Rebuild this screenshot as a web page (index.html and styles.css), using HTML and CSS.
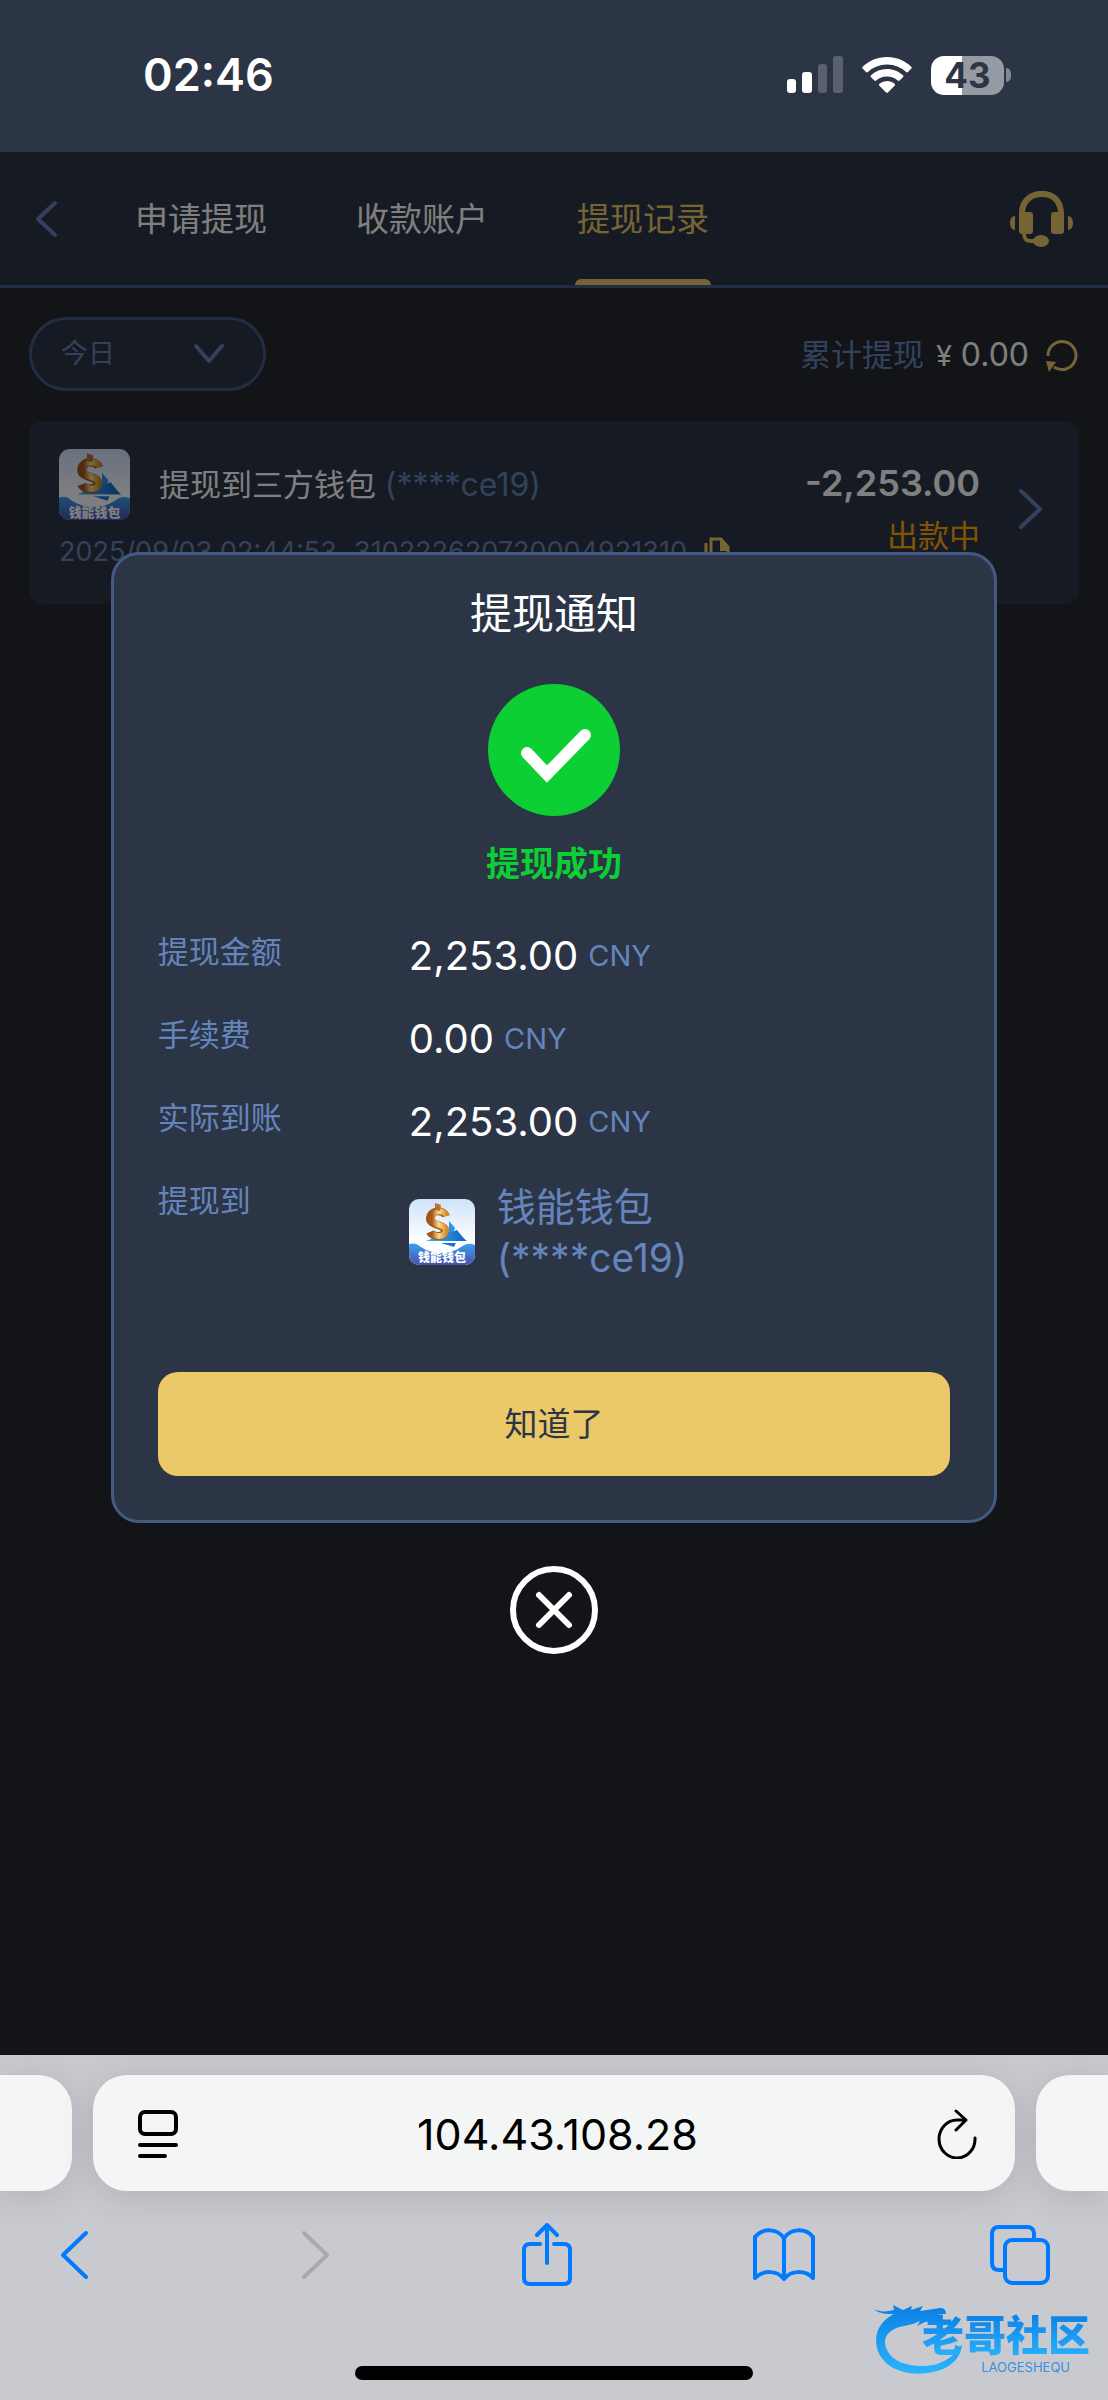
FILE: index.html
```html
<!DOCTYPE html>
<html lang="zh-CN">
<head>
<meta charset="utf-8">
<meta name="viewport" content="width=device-width, initial-scale=1">
<title>提现记录</title>
<link rel="stylesheet" href="styles.css">
</head>
<body>
<svg class="defs" aria-hidden="true">
  <defs>
    <linearGradient id="sky" x1="0" y1="0" x2="0" y2="1"><stop offset="0" stop-color="#cfe2fb"/><stop offset=".6" stop-color="#fbfdff"/></linearGradient>
    <linearGradient id="sea" x1="0" y1="0" x2="0" y2="1"><stop offset="0" stop-color="#3aa0ee"/><stop offset="1" stop-color="#4d4fb0"/></linearGradient>
    <linearGradient id="coin" x1="0" y1="0" x2="1" y2="0"><stop offset="0" stop-color="#a8591c"/><stop offset=".45" stop-color="#ffd98a"/><stop offset="1" stop-color="#d08a2c"/></linearGradient>
    <linearGradient id="sail" x1="0" y1="0" x2="1" y2="0"><stop offset="0" stop-color="#35b4f2"/><stop offset="1" stop-color="#1463c4"/></linearGradient>
    <linearGradient id="dragon" x1="0" y1="0" x2="0" y2="1"><stop offset="0" stop-color="#0b7fe4"/><stop offset="1" stop-color="#2bb4ff"/></linearGradient>
    <symbol id="wallet" viewBox="0 0 66 66">
      <rect width="66" height="66" rx="10" fill="url(#sky)"/>
      <path d="M40 22l6 7-2 5h4l10 8H18l22-10z" fill="#2b93e6"/>
      <path d="M17 42L48 31l9 11z" fill="url(#sail)"/>
      <path d="M32 44h15l-2 4z" fill="#1b74d0"/>
      <path d="M37 17c-2-6-15-7-16 2-1 8 16 6 15 13-1 7-13 6-15 1" fill="none" stroke="#9c5a1a" stroke-width="8"/>
      <path d="M38 17c-2-6-14-7-15 2-1 8 15 6 14 13-1 7-12 6-14 1" fill="none" stroke="url(#coin)" stroke-width="6"/>
      <path d="M26 4l6 2-1 6-5-1z" fill="#b5722a"/>
      <path d="M0 45c5-1 7-1 12 3 12 8 28 8 40 0 6-4 9-4 14-2v10a10 10 0 0 1-10 10H10A10 10 0 0 1 0 56z" fill="url(#sea)"/>
      <text x="33" y="63" text-anchor="middle" class="wallet-name">钱能钱包</text>
    </symbol>
  </defs>
</svg>

<div class="screen">
  <div class="status">
    <time class="clock">02:46</time>
    <div class="signals">
      <svg width="56" height="38" viewBox="0 0 56 38" fill="#fff">
        <rect y="23" width="9" height="14" rx="3"/><rect x="15" y="16" width="10" height="21" rx="3"/>
        <rect x="31" y="8" width="9" height="29" rx="3" opacity=".22"/><rect x="46" y="0" width="10" height="37" rx="3" opacity=".22"/>
      </svg>
      <svg width="50" height="36" viewBox="0 0 50 36" fill="#fff">
        <path d="M25 0c9.500 0 18 3.700 24.300 9.700.6.600.6 1.300 0 1.900l-3.300 3.400c-.5.500-1.300.5-1.900 0A27.600 27.600 0 0 0 25 7.500 27.600 27.600 0 0 0 5.900 15c-.6.500-1.400.5-1.900 0L.7 11.600c-.6-.6-.6-1.300 0-1.900C7 3.700 15.500 0 25 0z"/>
        <path d="M25 12c6.200 0 11.800 2.400 16 6.300.6.600.6 1.300 0 1.900l-3.400 3.400c-.5.500-1.200.5-1.800 0A16 16 0 0 0 25 19.500a16 16 0 0 0-10.800 4.100c-.6.500-1.300.5-1.800 0L9 20.200c-.6-.6-.6-1.300 0-1.900A23.400 23.400 0 0 1 25 12z"/>
        <path d="M25 24c2.900 0 5.500 1 7.600 2.800.6.500.6 1.300 0 1.900l-6.700 6.700c-.5.500-1.300.5-1.800 0l-6.700-6.700c-.6-.6-.6-1.400 0-1.900A11.600 11.600 0 0 1 25 24z"/>
      </svg>
      <div class="battery"><span class="level">43</span><i class="nub"></i></div>
    </div>
  </div>

  <div class="app">
    <header class="tabs-bar">
      <button class="icon-btn back" aria-label="返回"><svg width="24" height="38" viewBox="0 0 24 38"><path d="M21 3L4 19l17 16"/></svg></button>
      <nav class="tabs">
        <a class="tab" href="#apply">申请提现</a>
        <a class="tab" href="#account">收款账户</a>
        <a class="tab active" href="#records">提现记录</a>
      </nav>
      <button class="icon-btn" aria-label="客服">
        <svg width="64" height="58" viewBox="0 0 64 58" fill="#ebc868">
          <path d="M9 24C9 9 19 1 32 1s22 8 22 23h-6C48 13 42 7 32 7s-17 6-17 17z"/>
          <rect x="9" y="22" width="14" height="22" rx="3"/><rect x="41" y="22" width="13" height="22" rx="3"/>
          <path d="M5 26v14c-3 0-5-3-5-7s2-7 5-7zM58 26v14c3 0 5-3 5-7s-2-7-5-7z"/>
          <path d="M14 43c0 6 2 8 7 8h6" fill="none" stroke="#ebc868" stroke-width="4"/><ellipse cx="31" cy="51" rx="8" ry="6"/>
        </svg>
      </button>
    </header>

    <main class="records">
      <div class="filter">
        <div class="period">
          <select aria-label="时间范围"><option>今日</option></select>
          <svg class="period-arrow" width="32" height="22" viewBox="0 0 32 22"><path d="M3 3l13 15L29 3"/></svg>
        </div>
        <div class="total">
          <span class="muted">累计提现</span>
          <span class="sum"><span class="yen">¥</span> 0.00</span>
          <button class="icon-btn refresh" aria-label="刷新"><svg width="34" height="34" viewBox="0 0 34 34"><path d="M3 18A14 14 0 1 1 9 29" fill="none" stroke="#ebc868" stroke-width="3"/><path d="M1 23l10 1-7 10z" fill="#ebc868"/></svg></button>
        </div>
      </div>

      <article class="record">
        <div class="record-info">
          <div class="record-head">
            <svg class="record-logo" role="img" aria-label="钱能钱包"><use href="#wallet"/></svg>
            <span class="record-name">提现到三方钱包 <span class="muted account">(****ce19)</span></span>
          </div>
          <div class="record-meta"><span>2025/09/03 02:44:53</span><span>310222620720004921310</span>
            <svg width="26" height="30" viewBox="0 0 26 30" fill="none" stroke="#ebc868" stroke-width="3"><path d="M2 6v22h16M7 2h10l7 8v14H7z"/><path d="M16 2l8 8v4h-8z" fill="#ebc868" stroke="none"/></svg>
          </div>
        </div>
        <div class="record-result">
          <strong class="amount">-2,253.00</strong>
          <span class="state">出款中</span>
        </div>
        <svg class="record-go" width="26" height="42" viewBox="0 0 26 42"><path d="M3 3l19 18L3 39"/></svg>
      </article>
    </main>

    <div class="overlay">
      <section class="dialog" role="dialog" aria-labelledby="dialog-title">
        <h1 class="dialog-title" id="dialog-title">提现通知</h1>
        <svg class="success" width="132" height="132" viewBox="0 0 132 132"><circle cx="66" cy="66" r="66" fill="#0ccf33"/><path d="M39 69l20 21 38-39" fill="none" stroke="#fff" stroke-width="12" stroke-linecap="round"/></svg>
        <p class="success-text">提现成功</p>
        <dl class="details">
          <dt>提现金额</dt><dd>2,253.00 <small>CNY</small></dd>
          <dt>手续费</dt><dd>0.00 <small>CNY</small></dd>
          <dt>实际到账</dt><dd>2,253.00 <small>CNY</small></dd>
          <dt>提现到</dt>
          <dd class="target"><svg class="target-logo" role="img" aria-label="钱能钱包"><use href="#wallet"/></svg><span>钱能钱包<br>(****ce19)</span></dd>
        </dl>
        <button class="confirm">知道了</button>
      </section>
      <button class="icon-btn" aria-label="关闭"><svg width="88" height="90" viewBox="0 0 88 90" fill="none" stroke="#fff" stroke-width="6" stroke-linecap="round"><circle cx="44" cy="45" r="41"/><path d="M29 30l30 30M59 30L29 60"/></svg></button>
    </div>
  </div>

  <footer class="browser">
    <div class="address-row">
      <div class="side-tab"></div>
      <div class="address">
        <button class="icon-btn" aria-label="页面菜单"><svg width="40" height="48" viewBox="0 0 40 48" fill="none" stroke="#000" stroke-width="4" stroke-linecap="round"><rect x="2" y="2" width="36" height="22" rx="5"/><path d="M2 35h36M2 46h25"/></svg></button>
        <input class="url" type="text" value="104.43.108.28" aria-label="网址">
        <button class="icon-btn" aria-label="重新载入"><svg width="40" height="50" viewBox="0 0 40 50" fill="none" stroke="#000" stroke-width="3" stroke-linecap="round" stroke-linejoin="round"><path d="M38 29a18 19 0 1 1-18-18h8M19 2l10 9-10 10"/></svg></button>
      </div>
      <div class="side-tab"></div>
    </div>
    <nav class="toolbar">
      <button class="icon-btn" aria-label="后退"><svg width="30" height="50" viewBox="0 0 30 50"><path d="M27 3L4 25l23 22"/></svg></button>
      <button class="icon-btn" aria-label="前进" disabled><svg width="40" height="50" viewBox="-10 0 40 50"><path d="M3 3l23 22L3 47"/></svg></button>
      <button class="icon-btn" aria-label="分享"><svg width="50" height="64" viewBox="0 0 50 64"><path d="M18 21H8q-6 0-6 6v28q0 6 6 6h34q6 0 6-6V27q0-6-6-6H32M25 40V3M15 12L25 2l10 10"/></svg></button>
      <button class="icon-btn" aria-label="书签"><svg width="62" height="56" viewBox="0 0 62 56"><path d="M31 11C24 1 9 1 2 10v41c8-8 22-8 29 1 7-9 21-9 29-1V10C53 1 38 1 31 11v41"/></svg></button>
      <button class="icon-btn" aria-label="标签页"><svg width="60" height="60" viewBox="0 0 60 60"><rect x="15" y="15" width="43" height="43" rx="7"/><path d="M15 45H9q-7 0-7-7V9q0-7 7-7h28q7 0 7 7v6"/></svg></button>
    </nav>
    <div class="home-bar"></div>
    <div class="watermark">
      <svg width="92" height="72" viewBox="0 0 92 72" fill="url(#dragon)"><path d="M0 7c7 4 14 2 20 1l-1-5 10 5 9-4-1 4 12-4-3 5 20-3c4 0 6 2 6 6l-8 0 4 4-4 3-13 1-8 4 3-5-7 3-9 2C12 27 8 38 13 48c7 15 31 19 50 14 13-4 20-12 25-20-1 15-13 25-29 28C33 76 8 66 3 46-1 30 8 18 20 12 13 12 5 12 0 7z"/></svg>
      <div class="watermark-text"><b>老哥社区</b><span>LAOGESHEQU</span></div>
    </div>
  </footer>
</div>
</body>
</html>
```
FILE: styles.css
```css
:root {
  --panel: #2c3546;
  --line: #435a84;
  --muted: #6485bb;
  --gold: #ebc868;
}

* { box-sizing: border-box; }

body {
  margin: 0;
  background: #24282f;
  color: #fff;
  font-family: Inter, "Noto Sans CJK SC", sans-serif;
  font-size: 31px;
  line-height: 44px;
}

button, select, input { font: inherit; color: inherit; border: 0; background: none; padding: 0; margin: 0; }
svg { display: block; flex: none; }
.defs { position: absolute; width: 0; height: 0; }
.icon-btn { display: flex; flex: none; cursor: pointer; }
.muted { color: var(--muted); }
.wallet-name { font: 900 12px "Noto Sans CJK SC", sans-serif; fill: #fff; }

.screen { display: flex; flex-direction: column; min-height: 100vh; }

/* Status bar */
.status {
  display: flex;
  align-items: center;
  justify-content: space-between;
  height: 152px;
  padding: 0 97px 2px 143px;
  background: var(--panel);
}
.clock { font-size: 45px; font-weight: 600; }
.signals { display: flex; align-items: center; gap: 19px; }
.battery { display: flex; align-items: center; gap: 2px; }
.level {
  width: 73px;
  height: 39px;
  border-radius: 13px;
  background: linear-gradient(90deg, #fff 43%, #969aa2 43%);
  color: var(--panel);
  font-size: 35px;
  font-weight: 700;
  line-height: 39px;
  text-align: center;
}
.nub { width: 5px; height: 14px; border-radius: 0 5px 5px 0; background: #82868f; }

/* Page under the dialog */
.app { position: relative; flex: 1; }
.tabs-bar {
  display: flex;
  align-items: center;
  height: 136px;
  padding: 0 34px;
  background: var(--panel);
  border-bottom: 3px solid var(--line);
}
.back path, .period-arrow path, .record-go path { fill: none; stroke: var(--muted); stroke-width: 4; stroke-linecap: round; stroke-linejoin: round; }
.tabs { display: flex; flex: 1; align-self: stretch; gap: 85px; padding-left: 75px; }
.tab {
  position: relative;
  display: flex;
  align-items: center;
  padding: 0 2px;
  color: #fff;
  font-size: 33px;
  text-decoration: none;
}
.tab.active { color: var(--gold); }
.tab.active::after {
  content: "";
  position: absolute;
  inset: auto 0 0;
  height: 6px;
  border-radius: 6px 6px 0 0;
  background: var(--gold);
}

.records { display: flex; flex-direction: column; gap: 30px; padding: 29px; }
.filter { display: flex; align-items: center; justify-content: space-between; }
.period { position: relative; width: 237px; }
.period select {
  appearance: none;
  width: 100%;
  height: 74px;
  padding: 0 29px;
  border: 3px solid var(--line);
  border-radius: 37px;
  background: var(--panel);
  color: var(--muted);
  font-size: 27px;
}
.period-arrow { position: absolute; right: 41px; top: 26px; pointer-events: none; }
.total { display: flex; align-items: center; gap: 12px; padding-top: 2px; }
.sum { font-size: 32px; }
.yen { font-size: 29px; }
.refresh { margin-left: 4px; }

.record {
  display: flex;
  align-items: flex-start;
  height: 183px;
  padding: 28px 35px 0 30px;
  border-radius: 14px;
  background: var(--panel);
}
.record-info { flex: 1; }
.record-head { display: flex; align-items: center; gap: 29px; }
.record-logo { width: 71px; height: 71px; }
.account { font-size: 32px; }
.record-meta { display: flex; align-items: center; gap: 17px; padding-top: 10px; font-size: 27px; color: var(--muted); }
.record-result { display: flex; flex-direction: column; align-items: flex-end; gap: 9px; padding-top: 12px; }
.amount { font-size: 36px; font-weight: 600; }
.state { color: #ffaa09; }
.record-go { margin: 39px 0 0 38px; }

/* Dialog */
.overlay {
  position: absolute;
  inset: 0;
  display: flex;
  flex-direction: column;
  align-items: center;
  justify-content: center;
  gap: 42px;
  padding: 0 10%;
  background: rgba(0, 0, 0, .5);
}
.dialog {
  display: flex;
  flex-direction: column;
  align-items: center;
  width: 100%;
  padding: 31px 44px 44px;
  border: 3px solid var(--line);
  border-radius: 28px;
  background: var(--panel);
}
.dialog-title { margin: 0; font-size: 42px; font-weight: 400; line-height: 56px; }
.success { margin-top: 42px; }
.success-text { margin: 26px 0 0; color: #0ccf33; font-size: 34px; font-weight: 700; }
.details {
  display: grid;
  grid-template-columns: 251px 1fr;
  row-gap: 35px;
  width: 100%;
  margin: 46px 0 89px;
  line-height: 48px;
}
.details dt { color: var(--muted); line-height: 40px; }
.details dd { display: flex; align-items: center; gap: 10px; margin: 0; font-size: 40px; }
.details small { color: var(--muted); font-size: 29px; }
.details .target { gap: 22px; color: var(--muted); font-size: 39px; line-height: 51px; }
.target-logo { width: 66px; height: 66px; }
.confirm {
  width: 100%;
  height: 104px;
  border-radius: 20px;
  background: var(--gold);
  color: var(--panel);
  font-size: 33px;
}

/* Browser chrome */
.browser {
  position: relative;
  display: flex;
  flex-direction: column;
  align-items: center;
  height: 345px;
  padding: 20px 0;
  background: #c9cad0;
  overflow: hidden;
}
.address-row { display: flex; gap: 21px; width: 100%; }
.side-tab, .address { height: 116px; background: #f4f6f5; box-shadow: 0 6px 36px rgba(0, 0, 0, .12); }
.side-tab { width: 72px; border-radius: 0 34px 34px 0; }
.side-tab:last-child { border-radius: 34px 0 0 34px; }
.address { display: flex; flex: 1; align-items: center; padding: 2px 38px 0 45px; border-radius: 34px; color: #000; }
.url { flex: 1; min-width: 0; font-size: 43px; text-align: center; }
.toolbar { display: flex; align-items: center; justify-content: space-between; width: 100%; padding: 32px 57px 0 43px; }
.toolbar .icon-btn { justify-content: center; width: 62px; }
.toolbar path, .toolbar rect { fill: none; stroke: #007aff; stroke-width: 4; stroke-linecap: round; stroke-linejoin: round; }
.toolbar :disabled path { stroke: #a9aaae; }
.home-bar { width: 36%; height: 14px; margin-top: auto; border-radius: 7px; background: #000; }
.watermark { position: absolute; right: 18px; bottom: 26px; display: flex; }
.watermark-text { display: flex; flex-direction: column; align-items: flex-end; margin: 10px 0 0 -44px; }
.watermark b {
  background: linear-gradient(#0b7fe4, #2bb4ff);
  background-clip: text;
  color: transparent;
  font-size: 42px;
  font-weight: 900;
  line-height: 48px;
}
.watermark span { padding-right: 20px; color: #3a8fe0; font-size: 13px; line-height: 14px; }
```
